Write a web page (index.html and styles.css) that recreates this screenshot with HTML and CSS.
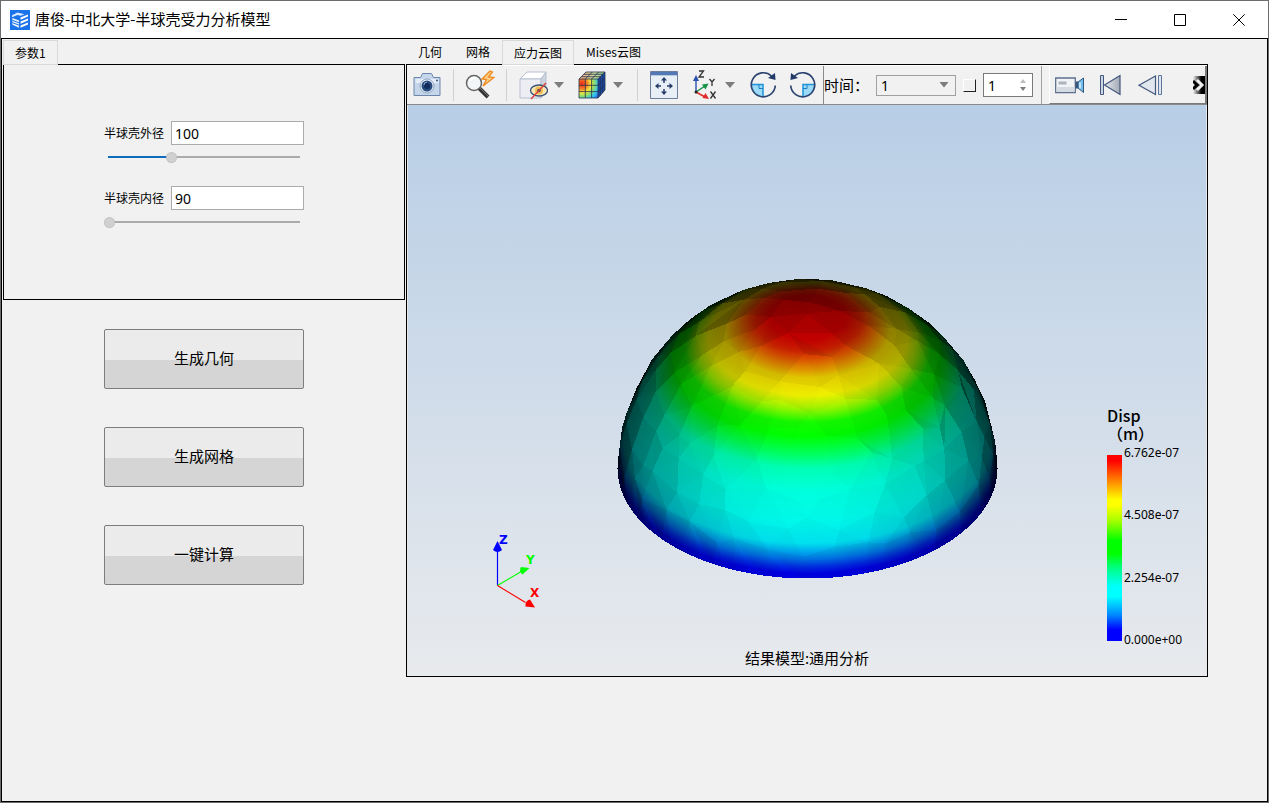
FILE: index.html
```html
<!DOCTYPE html>
<html lang="zh-CN">
<head>
<meta charset="utf-8">
<title>唐俊-中北大学-半球壳受力分析模型</title>
<link rel="stylesheet" href="styles.css">
</head>
<body>
<div class="window">
  <header class="titlebar">
    <svg class="app-icon" viewBox="0 0 20 20" aria-hidden="true">
      <rect width="20" height="20" fill="#1a73e8"/>
      <path d="M2 5.200 7.500 2.400l7 1.800-4 1.600L7.500 5 2 7.200z" fill="#d9e8fc"/>
      <path d="M2.400 8 9 10.400v7.400l-6.600-3z" fill="#e9f2fe"/>
      <path d="M2.400 10.300 9 12.800M2.400 12.600 9 15.200" stroke="#1a73e8" stroke-width="1"/>
      <path d="M10.500 7.500 18 4.500v2l-7.500 3.200zM10.500 11.500 18 8.500v2l-7.500 3.200zM10.500 15.400 18 12.400v2.200l-7.500 3.200z" fill="#fff"/>
    </svg>
    <h1 class="title">唐俊-中北大学-半球壳受力分析模型</h1>
    <div class="window-controls">
      <button class="wc" aria-label="最小化"><svg viewBox="0 0 12 12"><path d="M0 5.500h12"/></svg></button>
      <button class="wc" aria-label="最大化"><svg viewBox="0 0 12 12"><path d="M.5.5h11v11H.5z"/></svg></button>
      <button class="wc" aria-label="关闭"><svg viewBox="0 0 12 12"><path d="M.3.3l11.400 11.400M11.700.3.3 11.700"/></svg></button>
    </div>
  </header>

  <main class="content">
    <section class="side">
      <div class="tabs" role="tablist">
        <button class="tab active" role="tab" aria-selected="true">参数1</button>
      </div>
      <div class="pane">
        <form class="params">
          <div class="param">
            <label class="param-label" for="outer">半球壳外径</label>
            <input class="param-input" id="outer" type="text" value="100">
            <input class="slider outer" type="range" min="90" max="120" value="100" aria-label="半球壳外径滑块">
          </div>
          <div class="param">
            <label class="param-label" for="inner">半球壳内径</label>
            <input class="param-input" id="inner" type="text" value="90">
            <input class="slider" type="range" min="90" max="120" value="90" aria-label="半球壳内径滑块">
          </div>
        </form>
      </div>
      <div class="actions">
        <button class="action">生成几何</button>
        <button class="action">生成网格</button>
        <button class="action">一键计算</button>
      </div>
    </section>

    <section class="viewer">
      <div class="tabs" role="tablist">
        <button class="tab" role="tab">几何</button>
        <button class="tab" role="tab">网格</button>
        <button class="tab active" role="tab" aria-selected="true">应力云图</button>
        <button class="tab" role="tab">Mises云图</button>
      </div>
      <div class="view-frame">
        <div class="toolbar">
          <div class="tools">
            <button class="tool" aria-label="截图">
              <svg viewBox="0 0 30 30"><path d="M2 7.500h6.500l2-4h9l2 4H28v18H2z" fill="#c5d6ea" stroke="#6c87ab"/><path d="M3.500 9h23v4h-23z" fill="#e4edf7"/><circle cx="15" cy="16" r="7" fill="#e8f0f8" stroke="#8fa6c4"/><circle cx="15" cy="16" r="5.500" fill="#274a7f"/><circle cx="15" cy="16" r="3" fill="#122b58"/><path d="M12 15a3 3 0 0 1 3-3" stroke="#8ba9d3" fill="none"/><circle cx="25" cy="10.500" r="1" fill="#36577f"/></svg>
            </button>
            <span class="sep"></span>
            <button class="tool" aria-label="快速缩放">
              <svg viewBox="0 0 30 30"><path d="m14 18 9 9" stroke="#333" stroke-width="4"/><path d="m15 18 8 8" stroke="#777" stroke-width="1"/><circle cx="9" cy="13" r="7.500" fill="#f3f6f8" stroke="#666" stroke-width="1.500"/><path d="M5 11a5 5 0 0 1 6-3" fill="none" stroke="#fff" stroke-width="2"/><path d="m25 1-8 8 4.500.5-3.500 6.500 11-8.500-5.500-.5 4-5z" fill="#fbd08c" stroke="#ee8a1d" stroke-width="1.300"/></svg>
            </button>
            <span class="sep"></span>
            <button class="tool" aria-label="隐藏实体">
              <svg viewBox="0 0 30 30"><path d="m2 9 7-7h19l-5 7z" fill="#fff" stroke="#b8bfd0"/><path d="M2 9h21v19H2z" fill="#eceef4" stroke="#b8bfd0"/><path d="m23 9 5-7v18l-5 8z" fill="#cdd3df" stroke="#b8bfd0"/><ellipse cx="21" cy="20.500" rx="8.500" ry="5.500" fill="#fbe7b4" stroke="#3a5379" stroke-width="1.300"/><circle cx="21" cy="20.500" r="4" fill="#f0bd55"/><circle cx="21" cy="20.500" r="1.800" fill="#364c70"/><path d="m13 29 15-16" stroke="#d6433b" stroke-width="1.400"/></svg>
            </button>
            <button class="drop" aria-label="隐藏选项"></button>
            <button class="tool gap" aria-label="云图显示">
              <svg viewBox="0 0 30 30"><defs><radialGradient id="heat" cx="0.15" cy="0.25" r="1.050"><stop offset="0" stop-color="#f02a18"/><stop offset=".25" stop-color="#f47a28"/><stop offset=".45" stop-color="#f5e63c"/><stop offset=".62" stop-color="#8ede6a"/><stop offset=".82" stop-color="#35c8f0"/><stop offset="1" stop-color="#2877ea"/></radialGradient><linearGradient id="heattop"><stop offset="0" stop-color="#f3a184"/><stop offset=".6" stop-color="#cfe3a0"/><stop offset="1" stop-color="#79b784"/></linearGradient></defs><path d="m2 9 7-7h19l-7 7z" fill="url(#heattop)"/><path d="M2 9h19v19H2z" fill="url(#heat)"/><path d="m21 9 7-7v18l-7 8z" fill="#1748a5"/><path d="M2 9h19v19H2zM2 15.300h19M2 21.600h19M8.300 9v19M14.600 9v19M2 9l7-7h19v18l-7 8M21 9l7-7M8.300 9l7-7M14.600 9l7-7M4.300 6.700h19v19M6.700 4.300h19v18.800M21 15.300l7-6.800M21 21.600l7-7" fill="none" stroke="#24304c" stroke-width=".8"/></svg>
            </button>
            <button class="drop" aria-label="云图选项"></button>
            <span class="sep gap"></span>
            <button class="tool" aria-label="适应窗口">
              <svg viewBox="0 0 30 30"><path d="M1.500 1.500h27v27h-27z" fill="#e8eef6" stroke="#6d7e9c"/><path d="M2 2h26v3H2z" fill="#5278b5"/><path d="M2 5.500h26" stroke="#b8c8df"/><path d="M15 9v4M15 19v4M8 16h4M18 16h4" stroke="#243b66" stroke-width="1.500"/><path d="m15 7-3 3.500h6zM15 25l-3-3.500h6zM6 16l3.500-3v6zM24 16l-3.500-3v6z" fill="#243b66"/></svg>
            </button>
            <button class="tool" aria-label="视图方向">
              <svg viewBox="0 0 30 30"><path d="M7 22V8" stroke="#2a4fb0" stroke-width="1.400"/><path d="m7 5-3 6h6z" fill="#2a4fb0"/><path d="m7 22 9-6" stroke="#159344" stroke-width="1.500"/><path d="m19.500 13.500-6.500 1 3.500 5z" fill="#159344"/><path d="m7 22 9 5" stroke="#e22b2b" stroke-width="1.500"/><path d="m20 29-3.500-6-3 5z" fill="#e22b2b"/><circle cx="7" cy="22" r="1.500" fill="#222"/><path d="M10 1h4.500L10 7h5M20.500 9l2.500 3 2.500-3M23 12v4M21.500 21.500l5 7M26.500 21.500l-5 7" fill="none" stroke="#333" stroke-width="1.300"/></svg>
            </button>
            <button class="drop" aria-label="视图选项"></button>
            <button class="tool gap" aria-label="顺时针旋转">
              <svg viewBox="0 0 30 30"><path d="M3 14.500h12V27A12 12 0 0 1 3 14.500z" fill="#9bdbf8"/><path d="M3 14.500h12V27" fill="none" stroke="#1d95d8" stroke-width="1.500"/><path d="M11 14.500v4h4" fill="none" stroke="#1d7cc0"/><path d="M23.500 6a12 12 0 1 0 3.800 9.500" fill="none" stroke="#2c4470" stroke-width="1.700"/><path d="m27 3 .5 7-7.500-2z" fill="#223a68"/></svg>
            </button>
            <button class="tool" aria-label="逆时针旋转">
              <svg viewBox="0 0 30 30"><path d="M27 14.500H15V27a12 12 0 0 0 12-12.500z" fill="#9bdbf8"/><path d="M27 14.500H15V27" fill="none" stroke="#1d95d8" stroke-width="1.500"/><path d="M19 14.500v4h-4" fill="none" stroke="#1d7cc0"/><path d="M6.500 6a12 12 0 1 1-3.800 9.500" fill="none" stroke="#2c4470" stroke-width="1.700"/><path d="m3 3-.5 7 7.500-2z" fill="#223a68"/></svg>
            </button>
          </div>
          <div class="time">
            <label class="time-label" for="time">时间：</label>
            <span class="select-wrap"><select class="time-select" id="time" disabled><option>1</option></select></span>
            <input class="check" type="checkbox" aria-label="循环">
            <span class="spin"><input class="spin-input" type="text" value="1" aria-label="步数"><span class="spin-arrows"><button class="up" aria-label="增加"></button><button class="down" aria-label="减少"></button></span></span>
          </div>
          <div class="playback">
            <button class="tool" aria-label="录制动画">
              <svg viewBox="0 0 30 30"><path d="M.7 8h19.600v14.500H.7z" fill="#f1f3f6" stroke="#5d6f8e" stroke-width="1.300"/><path d="M1.500 17h18v5h-18z" fill="#d5dae3"/><path d="M3.500 11.500h8v3h-8z" fill="#adb2bd"/><path d="M20.500 11.500h2.500v7h-2.500z" fill="#3a5275"/><path d="m23 12 5.500-4v14.500L23 18z" fill="#73bdea" stroke="#31577f"/><path d="M25 12.500v6" stroke="#d8f0fc" stroke-width="1.500"/></svg>
            </button>
            <button class="tool" aria-label="第一帧">
              <svg viewBox="0 0 30 30"><defs><linearGradient id="steel"><stop offset="0" stop-color="#e5e9ee"/><stop offset="1" stop-color="#a3a9b4"/></linearGradient></defs><path d="M5.500 5.500h3v19h-3z" fill="#cbd5e4" stroke="#42577d"/><path d="M25 5.500v19L9.500 15z" fill="url(#steel)" stroke="#42577d" stroke-width="1.200"/></svg>
            </button>
            <button class="tool" aria-label="上一帧">
              <svg viewBox="0 0 30 30"><path d="M20.500 6v18.500L4 15.200z" fill="#e2e7ef" stroke="#42577d" stroke-width="1.200"/><path d="M23.500 5.500h3v19h-3z" fill="#dce5f1" stroke="#5e7699"/></svg>
            </button>
            <button class="expand" aria-label="更多">
              <svg viewBox="0 0 12 18"><defs><linearGradient id="fade"><stop offset="0" stop-color="#000" stop-opacity="0"/><stop offset=".7" stop-color="#000"/></linearGradient></defs><path d="M0 0h12v18H0z" fill="url(#fade)"/><path d="m0 5 4 4-4 4" fill="none" stroke="#000" stroke-width="3"/><path d="m4 4 5 5-5 5" fill="none" stroke="#f0f0f0" stroke-width="3"/></svg>
            </button>
          </div>
        </div>
        <div class="scene">
          <canvas class="dome" id="dome" width="390" height="310" aria-label="半球壳位移云图"></canvas>
          <svg class="triad" viewBox="0 0 64 80">
            <path d="M14.500 53.500V18" stroke="#00f" stroke-width="1.200"/><path d="m14.500 9 4.500 9q-4.500 4-9 0z" fill="#00f"/>
            <path d="M14.500 53.500 40 38.500" stroke="#0f0" stroke-width="1.200"/><path d="m46.500 36-8.500-1q-2.500 4 1.500 7.500z" fill="#0f0"/>
            <path d="m14.500 53.500 28 17" stroke="#f00" stroke-width="1.200"/><path d="m52 75.500-5-8q-5 1-4.500 7z" fill="#f00"/>
            <text class="axis" x="16" y="12" fill="#00f">Z</text>
            <text class="axis" x="43" y="32" fill="#0f0">Y</text>
            <text class="axis" x="47" y="65" fill="#f00">X</text>
          </svg>
          <div class="legend">
            <div class="legend-title">Disp<br>（m）</div>
            <div class="legend-body">
              <div class="bar"></div>
              <div class="ticks"><span>6.762e-07</span><span>4.508e-07</span><span>2.254e-07</span><span>0.000e+00</span></div>
            </div>
          </div>
          <div class="caption">结果模型:通用分析</div>
        </div>
      </div>
    </section>
  </main>
</div>
<script src="dome.js"></script>
</body>
</html>
```
FILE: styles.css
```css
* { box-sizing: border-box; }

body {
  margin: 0;
  font-family: "Noto Sans", "Noto Sans CJK SC", sans-serif;
  font-size: 12px;
  color: #000;
  background: #f1f1f1;
}

button, input, select { font: inherit; color: inherit; margin: 0; }
button { padding: 0; border: 0; background: none; }

.window {
  display: flex;
  flex-direction: column;
  min-height: 100vh;
  border: 1px solid #6d6b6d;
}

.titlebar {
  display: flex;
  align-items: center;
  height: 37px;
  padding-left: 9px;
  background: #fff;
}
.app-icon { width: 20px; height: 20px; margin-right: 5px; }
.title {
  flex: 1;
  margin: 0;
  padding-bottom: 2px;
  font-family: "Noto Sans CJK SC", sans-serif;
  font-size: 15px;
  font-weight: 400;
  line-height: 34px;
}
.window-controls { display: flex; }
.wc { display: grid; place-items: center; width: 59px; height: 36px; }
.wc svg { width: 12px; height: 12px; fill: none; stroke: #000; }

.content {
  flex: 1;
  display: grid;
  grid-template-columns: minmax(300px, 402fr) minmax(802px, 802fr) minmax(0, 58fr);
  column-gap: 1px;
  padding: 1px 0 0 1px;
  border: 1px solid #000;
}

.tabs { display: flex; height: 24px; }
.tab {
  height: 24px;
  padding: 0 11px;
  border: 1px solid transparent;
  font-family: "Noto Sans CJK SC", sans-serif;
  font-size: 12px;
  line-height: 22px;
  white-space: nowrap;
}
.viewer .tabs { padding-right: 1px; }
.tab.active {
  position: relative;
  height: 25px;
  border-color: #d9d9d9;
  background: #f1f1f1;
}

.side, .viewer { display: flex; flex-direction: column; min-width: 0; }
.viewer { padding-bottom: 124px; }

.pane {
  display: flex;
  justify-content: center;
  min-height: 236px;
  padding-top: 56px;
  border: 1px solid #000;
}
.params { display: flex; flex-direction: column; gap: 17px; }
.param {
  display: grid;
  grid-template-columns: 67px 133px;
  grid-template-rows: 24px 24px;
  align-items: center;
}
.param-label {
  font-family: "Noto Sans CJK SC", sans-serif;
  font-size: 12px;
  padding-bottom: 2px;
}
.param-input {
  width: 100%;
  height: 24px;
  padding: 0 3px;
  border: 1px solid #ababab;
  background: #fff;
  font-size: 14px;
}
.slider {
  grid-column: 1 / 3;
  appearance: none;
  width: 196px;
  height: 10px;
  background: linear-gradient(#ababab, #ababab) 4px 4px / 192px 2px no-repeat;
}
.slider.outer {
  background:
    linear-gradient(#0f6cbd, #0f6cbd) 4px 4px / 64px 2px no-repeat,
    linear-gradient(#ababab, #ababab) 4px 4px / 192px 2px no-repeat;
}
.slider::-webkit-slider-thumb {
  appearance: none;
  width: 11px;
  height: 11px;
  border: 1px dotted #b5b5b5;
  border-radius: 50%;
  background: #d0d0d0;
}

.actions {
  display: flex;
  flex-direction: column;
  align-items: center;
  gap: 38px;
  padding-top: 29px;
}
.action {
  width: 200px;
  height: 60px;
  padding-bottom: 3px;
  border: 1px solid #7d7d7d;
  border-radius: 2px;
  background: linear-gradient(#ebebeb 52%, #d5d5d5 52%);
  font-family: "Noto Sans CJK SC", sans-serif;
  font-size: 15px;
}

.view-frame {
  flex: 1;
  display: flex;
  flex-direction: column;
  border: 1px solid #000;
}
.toolbar {
  display: flex;
  height: 40px;
  border-top: 1px solid #fff;
  border-bottom: 1px solid #8a8a8a;
  background: #f1f1f1;
}
.tools { display: flex; align-items: center; }
.tool {
  flex: none;
  display: grid;
  place-items: center;
  width: 40px;
  height: 38px;
}
.tool svg { width: 30px; height: 30px; }
.gap { margin-left: 7px; }
.sep {
  width: 13px;
  height: 32px;
  background: linear-gradient(#d0d0d0, #d0d0d0) center / 1px 100% no-repeat;
}
.drop {
  width: 12px;
  height: 6px;
  background: #7d7d7d;
  clip-path: polygon(8% 0, 92% 0, 50% 100%);
}

.time {
  display: flex;
  align-items: center;
  gap: 7px;
  padding-right: 8px;
  border-left: 1px solid #8a8a8a;
  border-right: 1px solid #a0a0a0;
}
.time-label {
  width: 45px;
  padding-bottom: 2px;
  font-family: "Noto Sans CJK SC", sans-serif;
  font-size: 15px;
  white-space: nowrap;
}
.select-wrap { position: relative; display: flex; }
.select-wrap::after {
  content: "";
  position: absolute;
  top: 7px;
  right: 7px;
  width: 10px;
  height: 6px;
  background: #7d7d7d;
  clip-path: polygon(0 0, 100% 0, 50% 100%);
}
.time-select {
  appearance: none;
  width: 80px;
  height: 21px;
  padding: 0 4px;
  border: 1px solid #a0a0a0;
  border-radius: 0;
  background: #f1f1f1;
  font-size: 14px;
  line-height: 19px;
  opacity: 1;
  color: #000;
}
.check {
  appearance: none;
  width: 13px;
  height: 13px;
  border: 1px solid #fff;
  border-right-color: #222;
  border-bottom-color: #222;
  background: #f1f1f1;
}
.spin {
  display: flex;
  width: 50px;
  height: 24px;
  border: 1px solid #7a7a7a;
  background: #fff;
}
.spin-input {
  flex: 1;
  min-width: 0;
  padding: 0 4px;
  border: 0;
  background: none;
  font-size: 14px;
}
.spin-arrows {
  display: flex;
  flex-direction: column;
  justify-content: center;
  gap: 4px;
  width: 18px;
  padding-left: 6px;
}
.up, .down { width: 6px; height: 4px; }
.up { background: #bdbdbd; clip-path: polygon(50% 0, 100% 100%, 0 100%); }
.down { background: #7d7d7d; clip-path: polygon(0 0, 100% 0, 50% 100%); }

.playback {
  flex: 1;
  display: flex;
  align-items: center;
  margin-left: 7px;
  border-left: 1px solid #fff;
  border-right: 2px solid #7a7a7a;
  border-bottom: 1px solid #7a7a7a;
}
.expand { display: flex; margin-left: auto; }
.expand svg { width: 12px; height: 18px; }

.scene {
  position: relative;
  flex: 1;
  min-height: 480px;
  overflow: hidden;
  border-left: 1px solid #e8e8e8;
  border-right: 1px solid #e8e8e8;
  background: linear-gradient(#b8cee6, #e8eaed);
}
.dome {
  position: absolute;
  left: 50%;
  bottom: 95px;
  width: 390px;
  height: 310px;
  margin-left: -195px;
}
.triad { position: absolute; left: 75px; bottom: 64px; width: 64px; height: 80px; }
.axis { font: bold 12px "DejaVu Sans", sans-serif; }

.legend { position: absolute; right: 19px; bottom: 29px; width: 80px; }
.legend-title {
  padding-bottom: 4px;
  font-family: "Noto Sans CJK SC", sans-serif;
  font-size: 16px;
  font-weight: 500;
  line-height: 18px;
  white-space: nowrap;
}
.legend-body { display: flex; gap: 2px; height: 201px; }
.bar {
  width: 15px;
  margin: 9px 0 6px;
  background: linear-gradient(#f00 3%, #f50 10%, #fa0 17%, #ff0 24%, #ff0 27%, #af0 35%, #0f0 46%, #0f0 53%, #0f8 61%, #0ff 71%, #0ff 76%, #08f 86%, #00f 94%);
}
.ticks {
  display: flex;
  flex-direction: column;
  justify-content: space-between;
  font-size: 12px;
  line-height: 14px;
}
.caption {
  position: absolute;
  right: 0;
  bottom: 7px;
  left: 0;
  text-align: center;
  font-family: "Noto Sans CJK SC", sans-serif;
  font-size: 15px;
  line-height: 22px;
}
```
FILE: dome.js
```js
// Flat-shaded hemisphere with a displacement colour map, lit from the camera.
const canvas = document.getElementById("dome");
const ctx = canvas.getContext("2d");
const W = canvas.width, H = canvas.height;
const R = 190, CX = 195, CY = 197;
const ELEV = Math.asin(110 / 190);
const S = Math.sin(ELEV), C = Math.cos(ELEV);

const STOPS = [
  [0, 0, 0, 255], [0.03, 0, 0, 255], [0.07, 0, 50, 255], [0.12, 0, 130, 255],
  [0.21, 0, 240, 255], [0.33, 0, 255, 240], [0.48, 0, 255, 220],
  [0.58, 0, 255, 180], [0.65, 0, 255, 80], [0.71, 0, 255, 0],
  [0.76, 20, 255, 0], [0.81, 170, 255, 0], [0.85, 255, 255, 0],
  [0.9, 255, 225, 0], [0.93, 255, 140, 0], [0.96, 255, 40, 0], [0.98, 255, 0, 0], [1.01, 255, 0, 0]
];

function colour(t) {
  for (let i = 1; i < STOPS.length; i++) {
    if (t <= STOPS[i][0]) {
      const a = STOPS[i - 1], b = STOPS[i];
      const f = Math.max(0, (t - a[0]) / (b[0] - a[0]));
      return [1, 2, 3].map(k => a[k] + (b[k] - a[k]) * f);
    }
  }
  return [255, 0, 0];
}

let seed = 41;
function rand() {
  seed = (seed * 16807) % 2147483647;
  return seed / 2147483647 - 0.5;
}

// Vertices in rings from the rim up to the pole.
const RINGS = 10;
const rings = [];
for (let r = 0; r <= RINGS; r++) {
  const lat = (r / RINGS) * Math.PI / 2;
  const n = r === 0 ? 90 : r === RINGS ? 1 : Math.max(6, Math.round(38 * Math.cos(lat)));
  const phase = r * 0.37;
  const ring = [];
  for (let i = 0; i < n; i++) {
    const free = r > 0 && r < RINGS;
    const a = (i + (free ? rand() * 0.6 : 0)) / n * Math.PI * 2 + phase;
    const l = free ? lat + rand() * 0.09 : lat;
    ring.push({ a, p: [Math.cos(l) * Math.cos(a), Math.cos(l) * Math.sin(a), Math.sin(l)] });
  }
  ring.sort((u, v) => u.a - v.a);
  rings.push(ring);
}

const image = ctx.createImageData(W, H);

// x runs across the screen, u up the screen, w toward the camera.
function project(p) {
  return { x: CX + R * p[0], y: CY - R * (p[2] * C + p[1] * S), z: p[2] };
}

function triangle(a, b, c) {
  const e = b.map((v, i) => v - a[i]), f = c.map((v, i) => v - a[i]);
  let n = [e[1] * f[2] - e[2] * f[1], e[2] * f[0] - e[0] * f[2], e[0] * f[1] - e[1] * f[0]];
  const len = Math.hypot(...n) || 1;
  const mid = n[0] * a[0] + n[1] * a[1] + n[2] * a[2];
  n = n.map(v => v / len * Math.sign(mid));
  const face = n[2] * S - n[1] * C;
  if (face <= 0) return;
  const [A, B, D] = [a, b, c].map(project);
  const area = (B.x - A.x) * (D.y - A.y) - (D.x - A.x) * (B.y - A.y);
  const x0 = Math.floor(Math.min(A.x, B.x, D.x)), x1 = Math.ceil(Math.max(A.x, B.x, D.x));
  const y0 = Math.floor(Math.min(A.y, B.y, D.y)), y1 = Math.ceil(Math.max(A.y, B.y, D.y));
  for (let y = y0; y <= y1; y++) {
    for (let x = x0; x <= x1; x++) {
      const k1 = ((B.x - x) * (D.y - y) - (D.x - x) * (B.y - y)) / area;
      const k2 = ((D.x - x) * (A.y - y) - (A.x - x) * (D.y - y)) / area;
      const k3 = 1 - k1 - k2;
      if (k1 < -0.001 || k2 < -0.001 || k3 < -0.001) continue;
      const p = [0, 1, 2].map(i => a[i] * k1 + b[i] * k2 + c[i] * k3);
      const m = Math.hypot(...p);
      const smooth = Math.max(0, (p[2] * S - p[1] * C) / m);
      const light = Math.min(1, (face * 0.75 + smooth * 0.25) * 1.01);
      const rgb = colour(p[2] / m);
      const o = (y * W + x) * 4;
      for (let k = 0; k < 3; k++) image.data[o + k] = rgb[k] * light;
      image.data[o + 3] = 255;
    }
  }
}

const TAU = Math.PI * 2;
const norm = a => ((a % TAU) + TAU) % TAU;
for (let r = 0; r < RINGS; r++) {
  const lo = rings[r].map(v => ({ a: norm(v.a), p: v.p })).sort((u, v) => u.a - v.a);
  const hi = rings[r + 1].map(v => ({ a: norm(v.a), p: v.p })).sort((u, v) => u.a - v.a);
  const at = (ring, i) => ring[i % ring.length].a + (i >= ring.length ? TAU : 0);
  let i = 0, j = 0;
  while (i < lo.length || j < hi.length) {
    const stepLow = j >= hi.length || (i < lo.length && at(lo, i + 1) <= at(hi, j + 1));
    const a = lo[i % lo.length].p, b = hi[j % hi.length].p;
    if (stepLow) { triangle(a, lo[(i + 1) % lo.length].p, b); i++; }
    else { triangle(a, hi[(j + 1) % hi.length].p, b); j++; }
  }
}

ctx.putImageData(image, 0, 0);
```
